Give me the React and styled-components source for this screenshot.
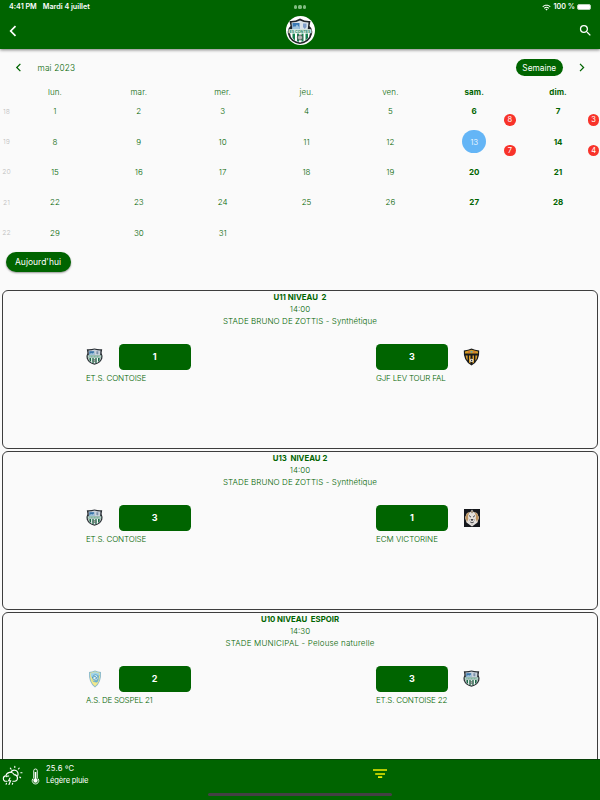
import React from "react"
import styled, { createGlobalStyle } from "styled-components"
import { MdSearch, MdWifi } from "react-icons/md"

const GlobalStyle = createGlobalStyle`
  * {
    box-sizing: border-box;
  }

  body {
    margin: 0;
    background: #fafafa;
    color: #006400;
    font-family: Inter, "Open Sans", sans-serif;
    font-size: 8px;
  }
`
const Screen = styled.div`
  display: flex;
  flex-direction: column;
  width: 600px;
  height: 800px;
  overflow: hidden;
`
const Header = styled.header`
  flex: none;
  height: 49px;
  background: #006400;
  color: #fff;
  box-shadow: 0 1px 3px rgba(0, 0, 0, 0.5);
  z-index: 1;
`
const StatusBar = styled.div`
  display: grid;
  grid-template-columns: 1fr 40px 1fr;
  align-items: center;
  height: 14px;
  padding: 0 9px;
  font-size: 7.2px;
  font-weight: 600;
  line-height: 14px;
`
const StatusLeft = styled.div`
  display: flex;
  gap: 6px;
`
const Dots = styled.div`
  display: flex;
  justify-content: center;
  gap: 1.6px;

  i {
    width: 3.2px;
    height: 3.2px;
    border-radius: 50%;
    background: #80bd80;
  }
`
const StatusRight = styled.div`
  display: flex;
  align-items: center;
  justify-content: flex-end;
  gap: 2px;
`
const Battery = styled.span`
  width: 14px;
  height: 6.6px;
  border: 0.5px solid #b5d2b5;
  border-radius: 2px;
  background: #fff;
`
const TitleBar = styled.div`
  display: grid;
  grid-template-columns: 1fr 32px 1fr;
  align-items: center;
  height: 33px;
  padding: 0 7px;
`
const SearchWrap = styled.div`
  display: flex;
  justify-content: flex-end;
`
const ClubBadge = styled.div`
  display: flex;
  align-items: center;
  justify-content: center;
  width: 29px;
  height: 29px;
  margin: 0 auto;
  border-radius: 50%;
  background: #fff;
`
const MonthBar = styled.div`
  display: flex;
  align-items: center;
  height: 17px;
  margin-top: 10px;
  padding: 0 14px 0 14px;
`
const Month = styled.span`
  flex: 1;
  margin-left: 14.5px;
  font-size: 8.3px;
  font-weight: 300;
  letter-spacing: 0.15px;
`
const ViewButton = styled.button`
  width: 46.5px;
  height: 17px;
  margin-right: 14.5px;
  padding: 0;
  border: 0;
  border-radius: 9px;
  background: #006400;
  color: #fff;
  font: 400 8.3px Inter, sans-serif;
`
const Week = styled.div`
  display: grid;
  grid-template-columns: 13px repeat(7, 1fr);
  align-items: center;
  height: 30.4px;
`
const WeekHead = styled(Week)`
  height: 20px;
  padding: 11px 0 1px;
  letter-spacing: 0.12px;
`
const Day = styled.div`
  position: relative;
  display: flex;
  align-items: center;
  justify-content: center;
  height: 100%;
  font-size: 8px;
  font-weight: ${({ $bold }) => ($bold ? 700 : 300)};
`
const WeekNumber = styled.div`
  color: #bdbdbd;
  font-size: 6.8px;
  font-weight: 300;
  text-align: center;
`
const Selected = styled.span`
  display: flex;
  align-items: center;
  justify-content: center;
  width: 23.5px;
  height: 23.5px;
  border-radius: 50%;
  background: #64b5f6;
  color: #fff;
  font-weight: 300;
`
const Count = styled.span`
  position: absolute;
  right: 0.6px;
  bottom: 0.4px;
  width: 11.6px;
  height: 11.6px;
  border-radius: 50%;
  background: #f8332a;
  color: #fff;
  font-size: 7.5px;
  font-weight: 400;
  line-height: 11.8px;
  text-align: center;
`
const TodayButton = styled.button`
  align-self: flex-start;
  flex: none;
  width: 65px;
  height: 20.5px;
  margin: 4px 0 17.5px 6px;
  padding: 0 1px 0 0;
  border: 0;
  border-radius: 11px;
  background: #006400;
  box-shadow: 0 1px 2px rgba(0, 0, 0, 0.4);
  color: #fff;
  font: 400 8.5px Inter, sans-serif;
`
const MatchList = styled.main`
  flex: 1;
  min-height: 0;
  overflow: hidden;
  padding: 0 2px;
`
const Card = styled.article`
  height: 159px;
  margin-bottom: 2px;
  border: 1px solid #3d3d3d;
  border-radius: 6px;
`
const CardTitle = styled.h2`
  margin: 0;
  font-size: 7.8px;
  font-weight: 700;
  line-height: 12px;
  text-align: center;
  white-space: pre;
`
const CardLine = styled.p`
  margin: 0;
  font-size: 8px;
  font-weight: 300;
  line-height: 12.3px;
  text-align: center;
  letter-spacing: ${({ $spacing }) => $spacing || 0}px;
`
const Teams = styled.div`
  display: grid;
  grid-template-columns: 290px 290px;
  margin-top: 16.2px;
  padding-left: 83px;
`
const TeamTop = styled.div`
  display: flex;
  align-items: center;
  flex-direction: ${({ $away }) => ($away ? "row-reverse" : "row")};
  justify-content: ${({ $away }) => ($away ? "flex-end" : "flex-start")};
  gap: 15px;
  height: 27px;
`
const Crest = styled.div`
  display: flex;
  justify-content: center;
  width: 17.6px;
  padding-bottom: 1px;
`
const Score = styled.div`
  width: 72px;
  height: 26.5px;
  border-radius: 4.5px;
  background: #006400;
  color: #fff;
  font-size: 9px;
  font-weight: 700;
  line-height: 26.5px;
  text-align: center;
`
const TeamName = styled.div`
  margin-top: 1.6px;
  font-size: 8px;
  font-weight: 300;
  line-height: 12px;
  letter-spacing: ${({ $spacing }) => $spacing || 0}px;
`
const Footer = styled.footer`
  flex: none;
  display: grid;
  grid-template-columns: 24px 22px 326px 1fr;
  align-items: start;
  position: relative;
  height: 41px;
  border-top: 1px solid #074007;
  background: #006400;
  color: #fff;
`
const FooterIcon = styled.div`
  padding: ${({ $top }) => $top}px 0 0 ${({ $left }) => $left || 0}px;
`
const Weather = styled.div`
  padding-top: 2.8px;
  font-size: 7.6px;
  font-weight: 400;
  line-height: 11.8px;
  letter-spacing: -0.18px;

  div:first-child {
    letter-spacing: 0.2px;
  }
`
const HomeIndicator = styled.span`
  position: absolute;
  left: 208px;
  top: 32.5px;
  width: 184px;
  height: 3px;
  border-radius: 2px;
  background: #444044;
`

const Chevron = ({ size, right, width = 2 }) => (
  <svg width={size} height={size} viewBox="0 0 12 12" fill="none" stroke="currentColor" strokeWidth={width}>
    <path d={right ? "M4 1.2 8.8 6 4 10.8" : "M8.5 1.2 3.7 6 8.5 10.8"} />
  </svg>
)

const ContoiseBadge = () => (
  <svg width="28" height="28" viewBox="0 0 28 28">
    <path d="M3.500 4Q9 4.500 14 1.500q5 3 10.500 2.500l-1 5q3.500 3 2.500 8-2 8.500-12 10Q4 25.500 2 17q-1-5 2.500-8z" fill="#202428" />
    <path d="M5.500 5.500q5 0 8.500-2 3.500 2 8.500 2l-.8 7H6.300z" fill="#dbe3ea" />
    <path d="M6.500 6h7v6.500h-7z" fill="#3979b4" />
    <path d="m6.500 11 1.500-2 1 1 2-2.500 2.500 3v2h-7z" fill="#9fc4de" />
    <path d="M17 6.500h3.500V10L18.800 12 17 10z" fill="#7f9dc8" />
    <path d="M4 12.500h20V16q-.5 8-10 9.500Q4.500 24 4 16z" fill="#fff" />
    <path d="M6.500 16.500H9v7L6.500 21zM11 16.500h2v8.300l-2-.6zM15.500 16.500h2v7.700l-2 .6zM19.500 16.500H22V21l-2.500 2.500z" fill="#16804f" />
    <circle cx="14" cy="20.500" r="2.600" fill="#b3bab7" stroke="#3d4644" strokeWidth=".8" />
    <path d="M2.500 12.300h23v4h-23z" fill="#d9efe6" />
    <text x="14" y="15.700" textAnchor="middle" fontSize="3.700" fontWeight="700" fill="#34866a">
      ES CONTES
    </text>
  </svg>
)

const ContoiseCrest = () => (
  <svg width="17" height="17" viewBox="0 0 17 17">
    <path d="M.8 1.200Q5 1.600 8.500.5 12 1.600 16.200 1.200L15.600 5q1.300 2.500.7 5.500Q14.500 15.500 8.500 16.700 2.500 15.500.7 10.500.1 7.500 1.400 5z" fill="#282e33" />
    <path d="M2.500 2.600q3.300 0 6-1Q11.200 2.600 14.500 2.600l-.4 4.600H2.900z" fill="#c9d2dc" />
    <path d="M3.300 3.200h4.900v3.900H3.300z" fill="#3a75aa" />
    <path d="m3.300 6.300 1.800-1.400 1.500.7 1.600-1.300v2.800H3.300z" fill="#9ec1d9" />
    <path d="M10.400 3.300h1.900v2.200l-.9 1-1-1z" fill="#7b8fa8" />
    <path d="M2 9.500h13q-.5 4.800-6.500 6Q2.500 14.300 2 9.500z" fill="#f6faf8" />
    <path d="M3.400 10h1.700v4.100L3.400 12.500zM6.300 10h1.400v5.200l-1.400-.5zM9.300 10h1.400v4.700l-1.400.5zM12 10h1.700v2.500L12 14.100z" fill="#1c6748" />
    <circle cx="8.500" cy="12.500" r="1.200" fill="#9ea9a5" stroke="#37463f" strokeWidth=".5" />
    <path d="M1.700 7.200h13.600v2.500H1.700z" fill="#b5d6ca" />
    <path d="M3.400 8.400h10.200" stroke="#6ba58e" strokeWidth=".9" strokeDasharray="1 .5" />
  </svg>
)

const FalCrest = () => (
  <svg width="17" height="18" viewBox="0 0 17 18">
    <path d="M.8 2.600 5 1.800 8.500.5l3.500 1.300 4.200.8Q17 13 8.500 17.500 0 13 .8 2.600z" fill="#17191b" />
    <path d="M2 3.600 8.500 1.800 15 3.600v2H2z" fill="#d39c21" />
    <path d="M5 3.200h2v1.500H5zM10.500 3.200h2v1.500h-2z" fill="#d66a35" />
    <path d="M7.500 3h2v1.600h-2z" fill="#6b9da8" />
    <path d="M2.600 7.500h2v5.100L3.500 11zM6 7.500h1.500v8L6 14.500zM9.500 7.500H11v7l-1.500 1zM12.400 7.500h2l-.8 3.500-1.200 1.700z" fill="#d99f2e" />
    <circle cx="8.600" cy="12.400" r="1.700" fill="#f1f1ed" />
    <path d="m8.600 11.500.8.700-.3 1h-1l-.3-1z" fill="#333" />
  </svg>
)

const VictorineCrest = () => (
  <svg width="16" height="18" viewBox="0 0 16 18">
    <path d="M0 0h16v18H0z" fill="#15171c" />
    <path d="m8 .5 1.500 2.500L13 4l2 4.500-1.500 5L8 17.500 2.500 13.500 1 8.500 3 4l3.500-1z" fill="#e4e0dc" />
    <path d="M3 4.500 5.500 3 4 7l.3 3L3 13 1.200 8.500zM13 4.500 10.500 3 12 7l-.3 3 1.300 3 1.800-4.500z" fill="#bd935f" />
    <path d="M6.500 2.200h3L8 4.500z" fill="#8b775a" />
    <path d="m5 6.500 2 1.700M11 6.500 9 8.200M7 10.500h2l-1 1.300zM6.200 13q1.800 1.400 3.600 0" fill="none" stroke="#33343a" strokeWidth=".9" />
    <path d="M5.500 10v2M10.500 10v2M8 13v3" stroke="#9a9794" strokeWidth=".5" />
  </svg>
)

const SospelCrest = () => (
  <svg width="14" height="18" viewBox="0 0 14 18">
    <path d="M1 2Q4 1.500 7 .4 10 1.500 13 2q.8 10.500-6 15.600Q.2 12.500 1 2z" fill="#8fbccb" />
    <path d="M2 2.900q3-.4 5-1.300 2 .9 5 1.300.4 9-5 13.300Q1.600 11.900 2 2.900z" fill="#f3e98a" />
    <path d="M2.500 3.500 7 2l4.500 1.500v2L3 7.500z" fill="#a3d4e8" />
    <path d="M3 9.500q4 3.500 8-.5-.7 2.300-2 3.500Q5.500 12.700 3 9.500z" fill="#64b0d2" />
    <circle cx="7.500" cy="7.600" r="2.900" fill="#e0eef0" stroke="#4f9ec6" strokeWidth=".9" />
    <path d="m4 8 3-2 1.500 2L11 5.500M6.500 9.500 9 8" fill="none" stroke="#3d90ba" strokeWidth=".8" />
  </svg>
)

const RainIcon = () => (
  <svg width="24" height="24" viewBox="0 0 24 24" fill="none" stroke="#fff" strokeWidth="1.100" strokeLinecap="round">
    <path d="M7 16.300H6.200a2.700 2.700 0 0 1-.3-5.400 4.400 4.400 0 0 1 8.200-1.300 3.400 3.400 0 0 1 .8 6.700h-2" />
    <path d="M6.500 11.600q1-.9 2.200-.5M10.800 7.300a3.800 3.800 0 1 1 6.900 3.400" />
    <path d="M14.800 1.300v1.200M19.200 3.100l-.8.900M10.300 3.200l.8.900M20.800 7.700H22M19.700 12l.9.700" />
    <path d="m10 13-1.400 2.800h2L9 19.500M6.500 18.200l-.4 1M12.700 18.200l-.4 1" />
  </svg>
)

const Thermometer = () => (
  <svg width="9" height="17" viewBox="0 0 9 17">
    <path d="M2.700 2.800a1.800 1.800 0 0 1 3.600 0v7.100a3.300 3.300 0 1 1-3.600 0z" fill="none" stroke="#fff" strokeWidth=".9" />
    <path d="M3.700 4h1.600v6.400a2.200 2.200 0 1 1-1.600 0z" fill="#fff" />
  </svg>
)

const FilterIcon = () => (
  <svg width="16" height="12" viewBox="0 0 16 12" stroke="#f0ed00" strokeWidth="1.700">
    <path d="M1 2h14M3.200 6h9.800M6 9.200h4.200" />
  </svg>
)

const crests = {
  contoise: <ContoiseCrest />,
  fal: <FalCrest />,
  victorine: <VictorineCrest />,
  sospel: <SospelCrest />,
}

const dayNames = ["lun.", "mar.", "mer.", "jeu.", "ven.", "sam.", "dim."]
const counts = { 6: 8, 7: 3, 13: 7, 14: 4 }
const weeks = [18, 19, 20, 21, 22].map((number, w) => ({
  number,
  days: dayNames.map((_, d) => w * 7 + d + 1),
}))

const matches = [
  {
    title: "U11 NIVEAU  2",
    time: "14:00",
    place: "STADE BRUNO DE ZOTTIS - Synthétique",
    spacing: 0.08,
    home: { name: "ET.S. CONTOISE", score: 1, crest: "contoise", spacing: -0.15 },
    away: { name: "GJF LEV TOUR FAL", score: 3, crest: "fal", spacing: -0.18 },
  },
  {
    title: "U13  NIVEAU 2",
    time: "14:00",
    place: "STADE BRUNO DE ZOTTIS - Synthétique",
    spacing: 0.08,
    home: { name: "ET.S. CONTOISE", score: 3, crest: "contoise", spacing: -0.15 },
    away: { name: "ECM VICTORINE", score: 1, crest: "victorine", spacing: -0.03 },
  },
  {
    title: "U10 NIVEAU  ESPOIR",
    time: "14:30",
    place: "STADE MUNICIPAL - Pelouse naturelle",
    spacing: 0.17,
    home: { name: "A.S. DE SOSPEL 21", score: 2, crest: "sospel", spacing: -0.25 },
    away: { name: "ET.S. CONTOISE 22", score: 3, crest: "contoise", spacing: -0.18 },
  },
]

const Team = ({ team, away }) => (
  <div>
    <TeamTop $away={away}>
      <Crest>{crests[team.crest]}</Crest>
      <Score>{team.score}</Score>
    </TeamTop>
    <TeamName $spacing={team.spacing}>{team.name}</TeamName>
  </div>
)

const App = () => {
  return (
    <Screen>
      <GlobalStyle />
      <Header>
        <StatusBar>
          <StatusLeft>
            <span>4:41 PM</span>
            <span>Mardi 4 juillet</span>
          </StatusLeft>
          <Dots><i /><i /><i /></Dots>
          <StatusRight>
            <MdWifi size={9} />
            <span>100 %</span>
            <Battery />
          </StatusRight>
        </StatusBar>
        <TitleBar>
          <Chevron size={12} width={1.7} />
          <ClubBadge>
            <ContoiseBadge />
          </ClubBadge>
          <SearchWrap>
            <MdSearch size={15} />
          </SearchWrap>
        </TitleBar>
      </Header>

      <MonthBar>
        <Chevron size={9} width={1.7} />
        <Month>mai 2023</Month>
        <ViewButton>Semaine</ViewButton>
        <Chevron size={9} width={1.7} right />
      </MonthBar>
      <WeekHead>
        <span />
        {dayNames.map((name, index) => (
          <Day key={name} $bold={index > 4}>{name}</Day>
        ))}
      </WeekHead>
      {weeks.map(week => (
        <Week key={week.number}>
          <WeekNumber>{week.number}</WeekNumber>
          {week.days.filter(day => day <= 31).map((day, index) => (
            <Day key={day} $bold={index > 4}>
              {day === 13 ? <Selected>{day}</Selected> : day}
              {counts[day] && <Count>{counts[day]}</Count>}
            </Day>
          ))}
        </Week>
      ))}
      <TodayButton>Aujourd'hui</TodayButton>

      <MatchList>
        {matches.map(match => (
          <Card key={match.title}>
            <CardTitle>{match.title}</CardTitle>
            <CardLine>{match.time}</CardLine>
            <CardLine $spacing={match.spacing}>{match.place}</CardLine>
            <Teams>
              <Team team={match.home} />
              <Team team={match.away} away />
            </Teams>
          </Card>
        ))}
      </MatchList>

      <Footer>
        <FooterIcon $top={5}><RainIcon /></FooterIcon>
        <FooterIcon $top={8} $left={7}><Thermometer /></FooterIcon>
        <Weather>
          <div>25.6 ºC</div>
          <div>Légère pluie</div>
        </Weather>
        <FooterIcon $top={8}><FilterIcon /></FooterIcon>
        <HomeIndicator />
      </Footer>
    </Screen>
  )
}

export default App
